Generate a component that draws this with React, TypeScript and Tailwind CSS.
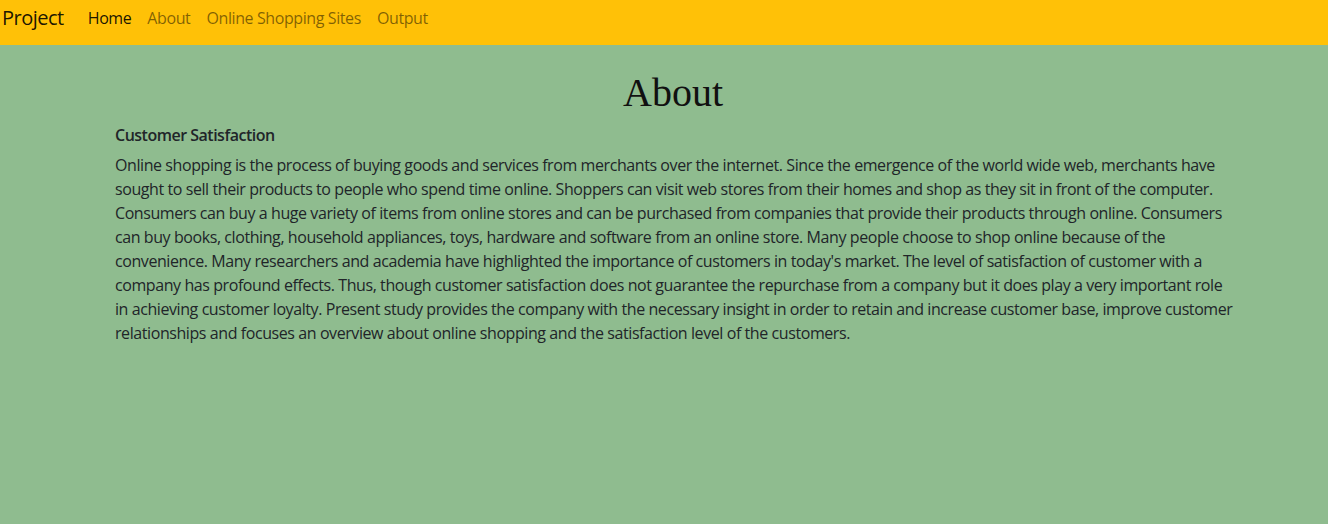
const lines = [
  "Online shopping is the process of buying goods and services from merchants over the internet. Since the emergence of the world wide web, merchants have",
  "sought to sell their products to people who spend time online. Shoppers can visit web stores from their homes and shop as they sit in front of the computer.",
  "Consumers can buy a huge variety of items from online stores and can be purchased from companies that provide their products through online. Consumers",
  "can buy books, clothing, household appliances, toys, hardware and software from an online store. Many people choose to shop online because of the",
  "convenience. Many researchers and academia have highlighted the importance of customers in today's market. The level of satisfaction of customer with a",
  "company has profound effects. Thus, though customer satisfaction does not guarantee the repurchase from a company but it does play a very important role",
  "in achieving customer loyalty. Present study provides the company with the necessary insight in order to retain and increase customer base, improve customer",
  "relationships and focuses an overview about online shopping and the satisfaction level of the customers.",
];

const links = ["About", "Online Shopping Sites", "Output"];

export default function App() {
  return (
    <div className="min-h-[524px] bg-[#8fbc8f] font-['Open_Sans',sans-serif] text-[#212529]">
      <nav className="h-[45px] bg-[#ffc107] pl-[2px] pt-[3px]">
        <div className="flex h-[30px] items-center tracking-[-0.4px]">
          <a className="mr-4 text-[20px] leading-[30px] text-black/90 tracking-[-0.5px]">Project</a>
          <a className="px-2 text-[16px] leading-6 text-black/90">Home</a>
          {links.map((l) => (
            <a key={l} className="px-2 text-[16px] leading-6 text-black/50">
              {l}
            </a>
          ))}
        </div>
      </nav>

      <main className="ml-[115px] w-[1116px] pt-[24px]">
        <h1 className="text-center font-['Liberation_Serif',serif] text-[40px] leading-[48px] text-[#111]">
          About
        </h1>
        <h6 className="mt-[9px] text-[16px] leading-[19px] font-semibold tracking-[-0.5px]">
          Customer Satisfaction
        </h6>
        <p className="mt-[8px] text-[16px] leading-6 tracking-[-0.42px]">
          {lines.map((l, i) => (
            <span key={i} className="block whitespace-nowrap">
              {l}
            </span>
          ))}
        </p>
      </main>
    </div>
  );
}
